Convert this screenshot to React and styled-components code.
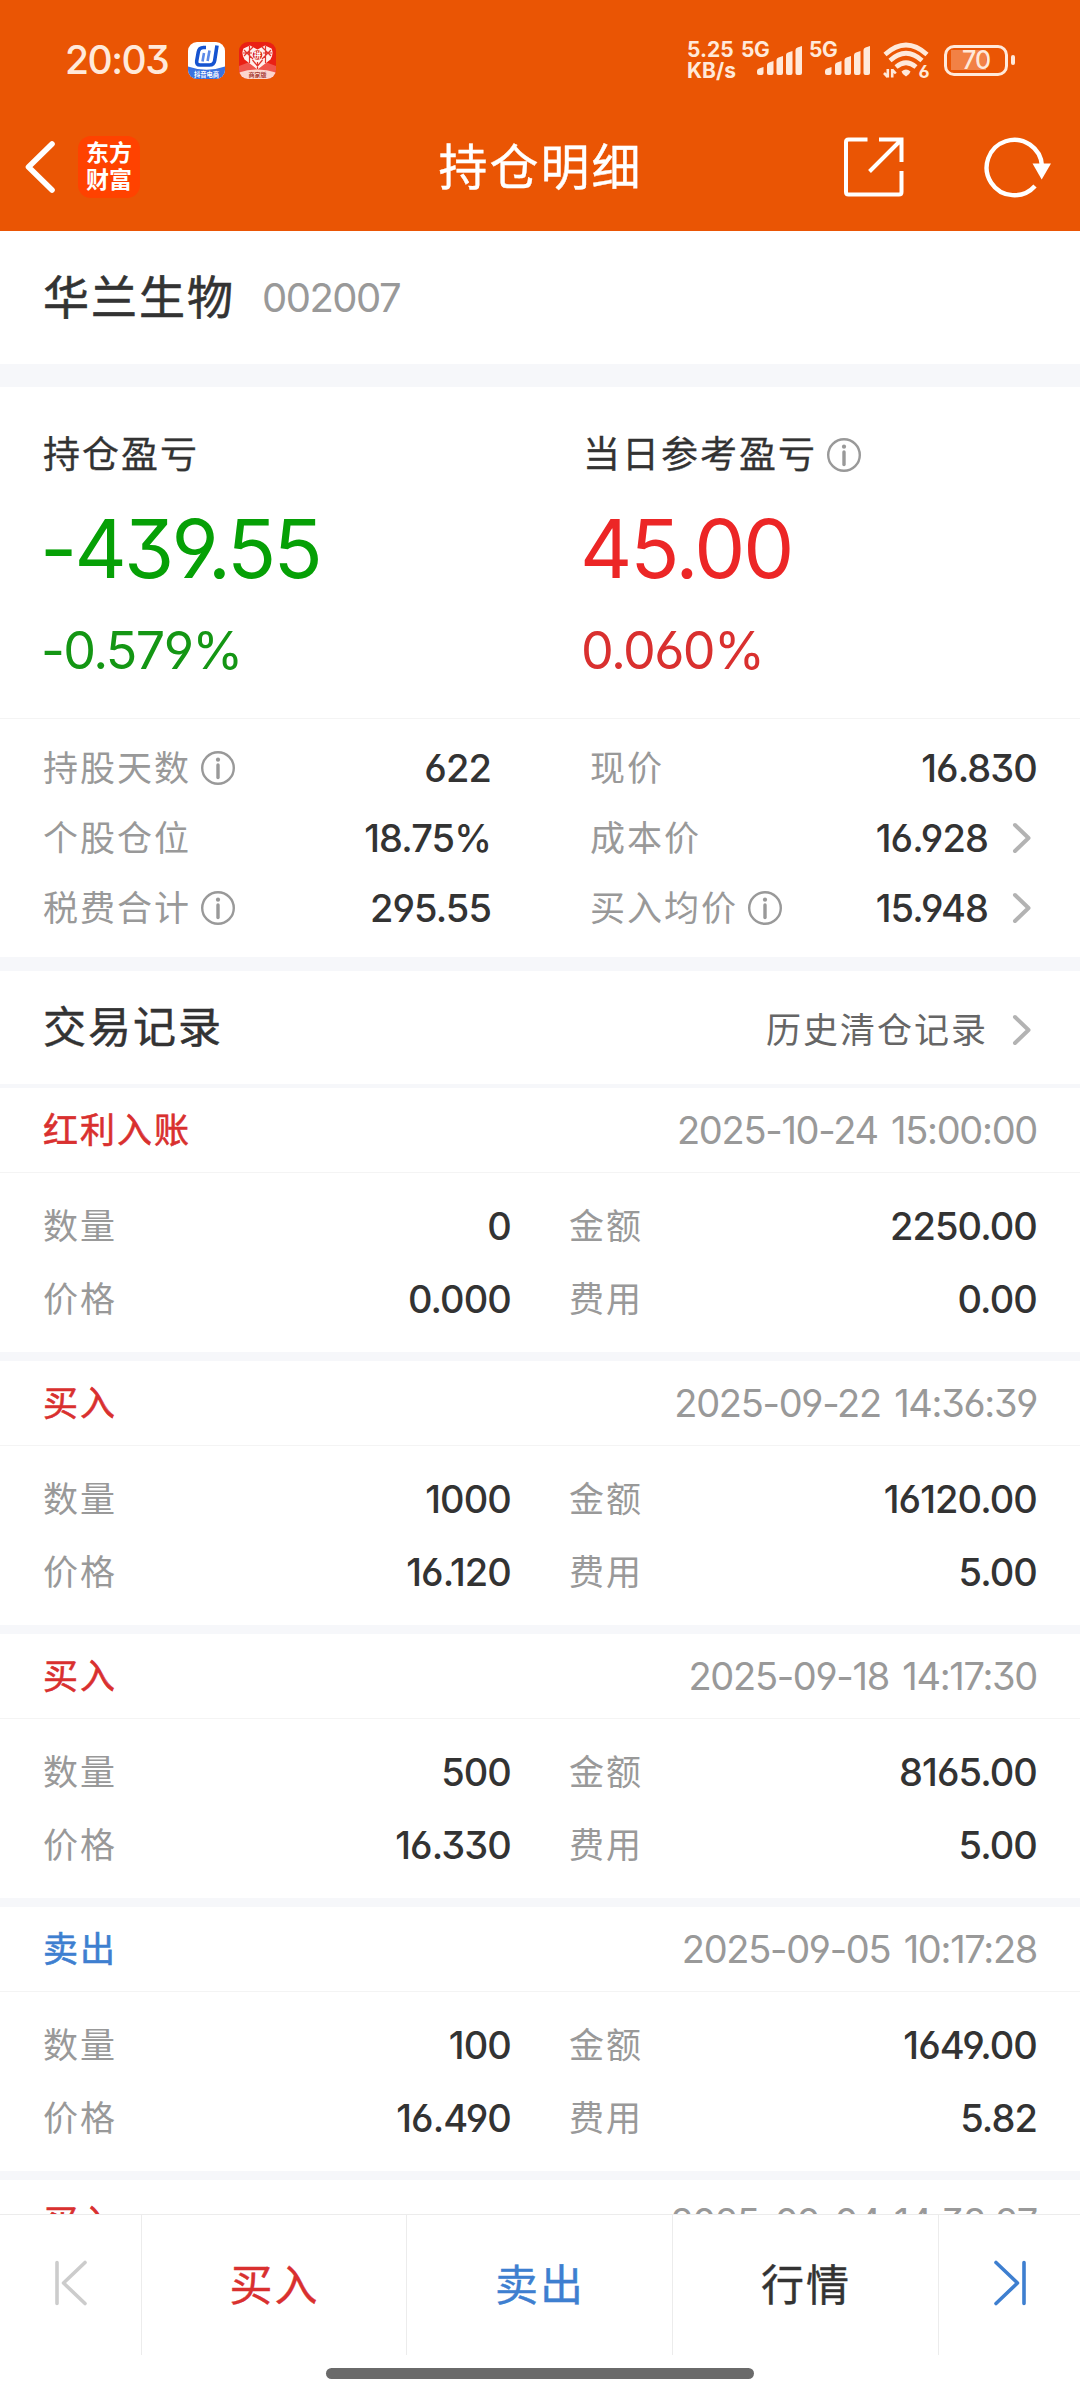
import React from "react";
import styled, { createGlobalStyle } from "styled-components";

const colors = {
  brand: "#ea5504",
  text: "#333333",
  muted: "#999999",
  sub: "#666666",
  red: "#d9302f",
  up: "#ec2626",
  green: "#06a006",
  blue: "#3e7fd0",
  gap: "#f6f7fa",
  status: "#ffe9da",
};

const holding = [
  [
    { label: "持股天数", info: true, value: "622" },
    { label: "现价", value: "16.830" },
  ],
  [
    { label: "个股仓位", value: "18.75%" },
    { label: "成本价", value: "16.928", link: true },
  ],
  [
    { label: "税费合计", info: true, value: "295.55" },
    { label: "买入均价", info: true, value: "15.948", link: true },
  ],
];

const records = [
  { type: "红利入账", time: "2025-10-24 15:00:00", count: "0", amount: "2250.00", price: "0.000", fee: "0.00" },
  { type: "买入", time: "2025-09-22 14:36:39", count: "1000", amount: "16120.00", price: "16.120", fee: "5.00" },
  { type: "买入", time: "2025-09-18 14:17:30", count: "500", amount: "8165.00", price: "16.330", fee: "5.00" },
  { type: "卖出", sell: true, time: "2025-09-05 10:17:28", count: "100", amount: "1649.00", price: "16.490", fee: "5.82" },
  { type: "买入", time: "2025-09-04 14:38:27" },
];

function Signal() {
  return (
    <SignalBox>
      <span>5G</span>
      <svg width="46" height="30" viewBox="0 0 46 30" fill={colors.status}>
        <path d="M0 26q0-2 2-2.500l4.500-1.500v6q0 2-2 2H2q-2 0-2-2z" />
        <path d="M10 20q0-2 2-2.500l4.500-1.500v12q0 2-2 2h-2.500q-2 0-2-2z" />
        <path d="M19.500 15q0-2 2-2.500l4.500-1.500v17q0 2-2 2h-2.500q-2 0-2-2z" />
        <path d="M29 10q0-2 2-2.500l4.500-1.500v22q0 2-2 2h-2.500q-2 0-2-2z" />
        <path d="M38.500 5q0-2 2-2.500l4.500-1.500v27q0 2-2 2h-2.500q-2 0-2-2z" />
      </svg>
    </SignalBox>
  );
}

function InfoIcon() {
  return (
    <svg width="36" height="36" viewBox="0 0 36 36" fill="none" stroke={colors.muted}>
      <circle cx="18" cy="18" r="15.800" strokeWidth="2.400" />
      <circle cx="18" cy="9.700" r="2.100" fill={colors.muted} stroke="none" />
      <path d="M18 15v12.500" strokeWidth="3.400" strokeLinecap="round" />
    </svg>
  );
}

function Chevron() {
  return (
    <svg width="20" height="32" viewBox="0 0 20 32" fill="none" stroke="#b3b3b3" strokeWidth="4" strokeLinecap="round" strokeLinejoin="round">
      <path d="M3 3L16.500 16L3 29" />
    </svg>
  );
}

export default function App() {
  return (
    <Screen>
      <GlobalStyle />
      <StatusBar>
        <Clock>20:03</Clock>
        <Notices>
          <svg width="37" height="37" viewBox="0 0 37 37">
            <defs>
              <clipPath id="shopClip">
                <rect width="37" height="37" rx="9" />
              </clipPath>
            </defs>
            <g clipPath="url(#shopClip)">
              <rect width="37" height="37" fill="#fff" />
              <path d="M0 24.500Q18.500 31 37 24.500V37H0z" fill="#3a72e0" />
              <path d="M18 5.500h-2.500q-4.500 0-5.200 4.500l-1.600 9q-.6 4 3.300 4h9.500q4.500 0 5.200-4.500L29 3.500" fill="none" stroke="#1553d0" strokeWidth="3.600" />
              <path d="M16 11l-1.500 8.500M21.500 8.500l-1.900 10.500" stroke="#5b8ae8" strokeWidth="2.600" />
              <text x="18.500" y="34.500" fontSize="6.300" textAnchor="middle" fontWeight="700" fill="#fff">抖音电商</text>
            </g>
          </svg>
          <svg width="37" height="37" viewBox="0 0 37 37">
            <defs>
              <clipPath id="sellerClip">
                <rect width="37" height="37" rx="9" />
              </clipPath>
            </defs>
            <g clipPath="url(#sellerClip)">
              <rect width="37" height="37" fill="#ea2014" />
              <path d="M0 24L18.500 17L37 24V30H0z" fill="#f0564c" />
              <path d="M18.500 27.500L5.500 17.500Q2 12 4.500 6.500L11 3.500L18.500 7.500L26 3.500L32.500 6.500Q35 12 31.500 17.500z" fill="#fff0ec" />
              <path d="M5 8l9 9M5 14l9-9M10.500 4v17M4 11h9M32 8l-9 9M32 14l-9-9M26.500 4v17M24 11h9M13.500 18l5 6 5-6M18.500 20v7" stroke="#e0352c" strokeWidth="1.200" fill="none" />
              <circle cx="18.500" cy="13" r="4.800" fill="#d82a22" />
              <text x="18.500" y="15.900" fontSize="7.500" textAnchor="middle" fontWeight="700" fill="#fff">拼</text>
              <path d="M0 30.500Q18.500 24.500 37 30.500V37H0z" fill="#fcd5cd" />
              <text x="18.500" y="34.800" fontSize="6" textAnchor="middle" fontWeight="700" fill="#a8433a">商家版</text>
            </g>
          </svg>
        </Notices>
        <Speed>
          <span>5.25</span>
          <span>KB/s</span>
        </Speed>
        <Signal />
        <Signal />
        <Wifi width="47" height="37" viewBox="0 0 47 37" fill="none" stroke={colors.status}>
          <path d="M2 12.500Q23 -6.500 44 12.500" strokeWidth="4.600" />
          <path d="M7 18.500Q23 4 39 18.500" strokeWidth="4.600" />
          <path d="M13 25Q23 16.500 33 25" strokeWidth="4.600" />
          <path d="M18.500 29.500Q23 25.500 27.500 29.500Q27 32 23 34.500Q19 32 18.500 29.500z" fill={colors.status} stroke="none" />
          <path d="M4.800 27v8.500M1 31l3.800 4M9.200 35.500V27M12.800 31.500L9.200 27.500" strokeWidth="2.600" />
          <text x="35.500" y="36" fontSize="18" fontWeight="700" fill={colors.status} stroke="none">6</text>
        </Wifi>
        <Battery>
          <Cell>70</Cell>
          <Nub />
        </Battery>
      </StatusBar>

      <NavBar>
        <NavSide>
          <svg width="36" height="56" viewBox="0 0 36 56" fill="none" stroke="#fff" strokeWidth="5.600" strokeLinecap="round" strokeLinejoin="round">
            <path d="M31 5L7.500 28L31 51" />
          </svg>
          <Brand>
            <span>东方</span>
            <span>财富</span>
          </Brand>
        </NavSide>
        <NavTitle>持仓明细</NavTitle>
        <NavActions>
          <svg width="60" height="60" viewBox="0 0 60 60" fill="none" stroke="#fff" strokeWidth="4">
            <path d="M24.500 2.500H5.500Q3 2.500 3 5V55Q3 57.500 5.500 57.500H56Q58.500 57.500 58.500 55V34" />
            <path d="M36 2.500H58.500V25M57.500 3.500L26.500 34.500" />
          </svg>
          <svg width="64" height="62" viewBox="0 0 64 62" fill="none">
            <path d="M51 50A27.700 27.700 0 1 1 58 30" stroke="#fff" strokeWidth="4.400" />
            <path d="M48.500 27.500H67L57.700 43.500z" fill="#fff" />
          </svg>
        </NavActions>
      </NavBar>

      <StockRow>
        <StockName>华兰生物</StockName>
        <StockCode>002007</StockCode>
      </StockRow>

      <Profit>
        <ProfitCell>
          <ProfitLabel>持仓盈亏</ProfitLabel>
          <ProfitValue $color={colors.green} $tight>
            -439.55
          </ProfitValue>
          <ProfitRate $color="#149614">-0.579%</ProfitRate>
        </ProfitCell>
        <ProfitCell>
          <ProfitLabel>
            当日参考盈亏
            <InfoIcon />
          </ProfitLabel>
          <ProfitValue $color={colors.up}>45.00</ProfitValue>
          <ProfitRate $color={colors.red}>0.060%</ProfitRate>
        </ProfitCell>
      </Profit>

      <Stats>
        {holding.map((row) => (
          <StatsRow key={row[0].label}>
            {row.map((item) => (
              <Stat key={item.label}>
                <Label>{item.label}</Label>
                {item.info && <InfoIcon />}
                <Value>{item.value}</Value>
                {item.link && (
                  <ChevronSlot>
                    <Chevron />
                  </ChevronSlot>
                )}
              </Stat>
            ))}
          </StatsRow>
        ))}
      </Stats>

      <RecordsHead>
        <RecordsTitle>交易记录</RecordsTitle>
        <HistoryLink>
          历史清仓记录
          <ChevronSlot>
            <Chevron />
          </ChevronSlot>
        </HistoryLink>
      </RecordsHead>

      <RecordList>
        {records.map((r) => (
          <Record key={r.time}>
            <RecordHead>
              <RecordType $sell={r.sell}>{r.type}</RecordType>
              <RecordTime>{r.time}</RecordTime>
            </RecordHead>
            {r.count && (
              <RecordBody>
                <Field>
                  <Label>数量</Label>
                  <Value>{r.count}</Value>
                </Field>
                <Field>
                  <Label>金额</Label>
                  <Value>{r.amount}</Value>
                </Field>
                <Field>
                  <Label>价格</Label>
                  <Value>{r.price}</Value>
                </Field>
                <Field>
                  <Label>费用</Label>
                  <Value>{r.fee}</Value>
                </Field>
              </RecordBody>
            )}
          </Record>
        ))}
      </RecordList>

      <TabBar>
        <Tab $color="#cccccc">
          <svg width="36" height="48" viewBox="0 0 36 48" fill="none" stroke="currentColor" strokeWidth="3.600" strokeLinecap="round" strokeLinejoin="round">
            <path d="M4 3.500V44.500M32 3.500L10.500 24L32 44.500" />
          </svg>
        </Tab>
        <Tab $color={colors.red}>
          <TabText>买入</TabText>
        </Tab>
        <Tab $color={colors.blue}>
          <TabText>卖出</TabText>
        </Tab>
        <Tab $color={colors.text}>
          <TabText>行情</TabText>
        </Tab>
        <Tab $color={colors.blue}>
          <svg width="36" height="48" viewBox="0 0 36 48" fill="none" stroke="currentColor" strokeWidth="3.600" strokeLinecap="round" strokeLinejoin="round">
            <path d="M32 3.500V44.500M4 3.500L25.500 24L4 44.500" />
          </svg>
        </Tab>
      </TabBar>
      <HomeArea>
        <HomeBar />
      </HomeArea>
    </Screen>
  );
}

const GlobalStyle = createGlobalStyle`
  * {
    box-sizing: border-box;
  }

  body {
    margin: 0;
    background: #fff;
    font-family: Inter, "Noto Sans CJK SC", sans-serif;
    font-feature-settings: "cv03", "cv04", "cv09";
    color: ${colors.text};
  }

  svg {
    display: block;
    flex: none;
    overflow: visible;
  }
`;

const Screen = styled.div`
  display: flex;
  flex-direction: column;
  width: 1080px;
  height: 2400px;
  overflow: hidden;
  background: #fff;
  white-space: nowrap;
`;

const StatusBar = styled.div`
  display: flex;
  align-items: center;
  height: 103px;
  padding: 17px 65px 0 65px;
  background: ${colors.brand};
  color: ${colors.status};
`;

const Clock = styled.div`
  width: 123px;
  font-size: 39px;
  font-weight: 500;
  letter-spacing: -1.5px;
  line-height: 48px;
`;

const Notices = styled.div`
  display: flex;
  gap: 14px;
  margin-right: auto;
`;

const Speed = styled.div`
  display: flex;
  flex-direction: column;
  width: 54px;
  font-size: 21px;
  font-weight: 700;
  line-height: 21px;
`;

const SignalBox = styled.div`
  display: flex;
  align-items: flex-end;
  width: 68px;
  height: 34px;
  padding-bottom: 2px;

  span {
    align-self: flex-start;
    width: 16px;
    font-size: 21px;
    font-weight: 700;
    letter-spacing: -0.5px;
    line-height: 14px;
  }
`;

const Wifi = styled.svg`
  margin-left: 6px;
`;

const Battery = styled.div`
  display: flex;
  align-items: center;
  gap: 3px;
  margin-left: 14px;
`;

const Cell = styled.div`
  display: flex;
  align-items: center;
  justify-content: center;
  width: 64px;
  height: 31px;
  border: 3px solid ${colors.status};
  border-radius: 10px;
  background: linear-gradient(90deg, #f28145 65%, transparent 65%) 4px center / 54px 20px no-repeat;
  font-size: 25px;
  font-weight: 500;
  letter-spacing: -1px;
`;

const Nub = styled.div`
  width: 4px;
  height: 10px;
  border-radius: 2px;
  background: ${colors.status};
`;

const NavBar = styled.div`
  display: grid;
  grid-template-columns: 1fr auto 1fr;
  align-items: center;
  height: 128px;
  padding: 0 32px 0 21px;
  background: ${colors.brand};
  color: #fff;
`;

const NavSide = styled.div`
  display: flex;
  align-items: center;
  gap: 21px;
`;

const Brand = styled.div`
  display: flex;
  flex-direction: column;
  align-items: center;
  justify-content: center;
  width: 62px;
  height: 62px;
  border-radius: 13px;
  background: #ff4200;
  font-size: 23px;
  font-weight: 700;
  line-height: 27px;
`;

const NavTitle = styled.div`
  padding: 2px 0 0 12px;
  font-size: 49px;
  letter-spacing: 2px;
  line-height: 60px;
  -webkit-text-stroke: 0.4px currentColor;
`;

const NavActions = styled.div`
  display: flex;
  align-items: center;
  justify-content: flex-end;
  gap: 81px;
`;

const StockRow = styled.div`
  display: flex;
  align-items: center;
  gap: 27px;
  height: 156px;
  padding: 0 43px;
  border-bottom: 23px solid ${colors.gap};
`;

const StockName = styled.div`
  padding-bottom: 8px;
  font-size: 46px;
  letter-spacing: 2px;
  -webkit-text-stroke: 0.6px currentColor;
`;

const StockCode = styled.div`
  color: ${colors.muted};
  font-size: 40px;
  letter-spacing: -1.5px;
`;

const Profit = styled.div`
  display: grid;
  grid-template-columns: 540px 1fr;
  height: 332px;
  padding: 40px 0 0 43px;
  border-bottom: 1px solid #f4f4f4;
`;

const ProfitCell = styled.div`
  display: flex;
  flex-direction: column;
`;

const ProfitLabel = styled.div`
  display: flex;
  align-items: center;
  gap: 9px;
  font-size: 37px;
  letter-spacing: 2px;
  line-height: 56px;
  -webkit-text-stroke: 0.3px currentColor;
`;

const ProfitValue = styled.div`
  margin: 16px 0 0 -3px;
  color: ${(p) => p.$color};
  font-size: 81px;
  letter-spacing: ${(p) => (p.$tight ? "-2.8px" : "-2.1px")};
  line-height: 100px;
`;

const ProfitRate = styled.div`
  margin: 20px 0 0 -2px;
  color: ${(p) => p.$color};
  font-size: 52px;
  letter-spacing: -1.6px;
  line-height: 64px;
`;

const Stats = styled.div`
  height: 252px;
  padding: 14px 43px 0;
  border-bottom: 14px solid ${colors.gap};
`;

const StatsRow = styled.div`
  display: grid;
  grid-template-columns: 448px 447px;
  justify-content: space-between;
`;

const Stat = styled.div`
  display: flex;
  align-items: center;
  height: 70px;

  > svg {
    margin-left: 9px;
  }
`;

const Label = styled.div`
  padding-bottom: 5px;
  color: ${colors.muted};
  font-size: 35px;
  letter-spacing: 2px;
`;

const Value = styled.div`
  margin-left: auto;
  font-size: 38px;
  font-weight: 450;
  letter-spacing: -0.9px;
`;

const ChevronSlot = styled.span`
  display: flex;
  justify-content: center;
  width: 31px;
  margin-left: 18px;
`;

const RecordsHead = styled.div`
  display: flex;
  align-items: center;
  justify-content: space-between;
  height: 117px;
  padding: 0 43px;
  border-bottom: 4px solid ${colors.gap};
`;

const RecordsTitle = styled.div`
  padding-bottom: 8px;
  font-size: 43px;
  letter-spacing: 2px;
  -webkit-text-stroke: 0.5px currentColor;
`;

const HistoryLink = styled.div`
  display: flex;
  align-items: center;
  padding-top: 4px;
  color: ${colors.sub};
  font-size: 35px;
  letter-spacing: 2px;
  line-height: 48px;
`;

const RecordList = styled.div`
  flex: 1;
  min-height: 0;
  overflow: hidden;
`;

const Record = styled.div`
  height: 273px;
  border-bottom: 9px solid ${colors.gap};
`;

const RecordHead = styled.div`
  display: flex;
  align-items: center;
  justify-content: space-between;
  height: 85px;
  padding: 0 43px;
  border-bottom: 1px solid #f4f4f4;
`;

const RecordType = styled.div`
  padding-bottom: 5px;
  color: ${(p) => (p.$sell ? colors.blue : colors.red)};
  font-size: 35px;
  letter-spacing: 2px;
  -webkit-text-stroke: 0.6px currentColor;
`;

const RecordTime = styled.div`
  color: ${colors.muted};
  font-size: 38px;
  letter-spacing: -1.3px;
  word-spacing: 4px;
`;

const RecordBody = styled.div`
  display: grid;
  grid-template-columns: 468px 468px;
  justify-content: space-between;
  padding: 16px 43px 0;
`;

const Field = styled.div`
  display: flex;
  align-items: center;
  height: 73px;
`;

const TabBar = styled.div`
  display: grid;
  grid-template-columns: 141px 265px 266px 266px 142px;
  height: 141px;
  border-top: 1px solid #ececec;
`;

const Tab = styled.div`
  display: flex;
  align-items: center;
  justify-content: center;
  padding-bottom: 4px;
  color: ${(p) => p.$color};

  & + & {
    border-left: 1px solid #ececec;
  }
`;

const TabText = styled.span`
  padding: 0 0 3px 1px;
  font-size: 43px;
  letter-spacing: 2px;
  -webkit-text-stroke: 0.4px currentColor;
`;

const HomeArea = styled.div`
  display: flex;
  justify-content: center;
  height: 45px;
  padding-top: 13px;
`;

const HomeBar = styled.div`
  width: 428px;
  height: 11px;
  border-radius: 6px;
  background: #6a6a6a;
`;
